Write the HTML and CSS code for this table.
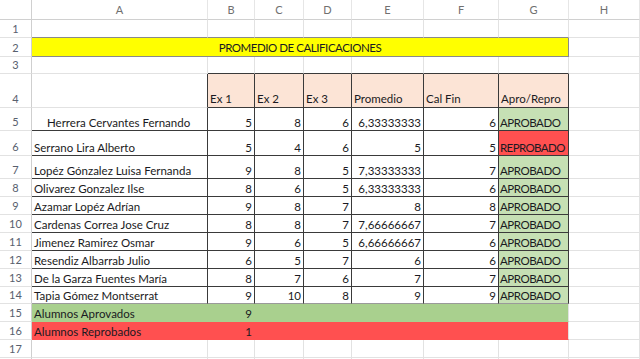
FILE: index.html
```html
<!DOCTYPE html>
<html lang="es">
<head>
<meta charset="utf-8">
<title>Promedio de calificaciones</title>
<link rel="stylesheet" href="styles.css">
</head>
<body>
<div class="sheet">
  <!-- column headers -->
  <div class="c ch corner"></div>
  <div class="c ch">A</div>
  <div class="c ch">B</div>
  <div class="c ch">C</div>
  <div class="c ch">D</div>
  <div class="c ch">E</div>
  <div class="c ch">F</div>
  <div class="c ch">G</div>
  <div class="c ch">H</div>

  <!-- row 1 -->
  <div class="c rh r1">1</div>
  <div class="c r1 above"></div><div class="c r1 above"></div><div class="c r1 above"></div><div class="c r1 above"></div><div class="c r1 above"></div><div class="c r1 above"></div><div class="c r1 above"></div><div class="c r1"></div>

  <!-- row 2 -->
  <div class="c rh r2">2</div>
  <div class="c r2 title caps">PROMEDIO DE CALIFICACIONES</div>
  <div class="c r2"></div>

  <!-- row 3 -->
  <div class="c rh r3">3</div>
  <div class="c r3"></div>
  <div class="c r3 above-dark"></div><div class="c r3 above-dark"></div><div class="c r3 above-dark"></div><div class="c r3 above-dark"></div><div class="c r3 above-dark"></div><div class="c r3 above-dark"></div>
  <div class="c r3"></div>

  <!-- row 4 -->
  <div class="c rh r4">4</div>
  <div class="c r4 left-of"></div>
  <div class="c r4 t hd">Ex 1</div>
  <div class="c r4 t hd">Ex 2</div>
  <div class="c r4 t hd">Ex 3</div>
  <div class="c r4 t hd">Promedio</div>
  <div class="c r4 t hd">Cal Fin</div>
  <div class="c r4 t hd">Apro/Repro</div>
  <div class="c r4"></div>

  <!-- row 5 -->
  <div class="c rh r5">5</div>
  <div class="c r5 t indent">Herrera Cervantes Fernando</div>
  <div class="c r5 t n">5</div><div class="c r5 t n">8</div><div class="c r5 t n">6</div>
  <div class="c r5 t n">6,33333333</div><div class="c r5 t n">6</div>
  <div class="c r5 t ok caps">APROBADO</div>
  <div class="c r5"></div>

  <!-- row 6 -->
  <div class="c rh r6">6</div>
  <div class="c r6 t">Serrano Lira Alberto</div>
  <div class="c r6 t n">5</div><div class="c r6 t n">4</div><div class="c r6 t n">6</div>
  <div class="c r6 t n">5</div><div class="c r6 t n">5</div>
  <div class="c r6 t bad caps">REPROBADO</div>
  <div class="c r6"></div>

  <!-- row 7 -->
  <div class="c rh r7">7</div>
  <div class="c r7 t">Lopéz Gónzalez Luisa Fernanda</div>
  <div class="c r7 t n">9</div><div class="c r7 t n">8</div><div class="c r7 t n">5</div>
  <div class="c r7 t n">7,33333333</div><div class="c r7 t n">7</div>
  <div class="c r7 t ok caps">APROBADO</div>
  <div class="c r7"></div>

  <!-- row 8 -->
  <div class="c rh rs">8</div>
  <div class="c rs t">Olivarez Gonzalez Ilse</div>
  <div class="c rs t n">8</div><div class="c rs t n">6</div><div class="c rs t n">5</div>
  <div class="c rs t n">6,33333333</div><div class="c rs t n">6</div>
  <div class="c rs t ok caps">APROBADO</div>
  <div class="c rs"></div>

  <!-- row 9 -->
  <div class="c rh rs">9</div>
  <div class="c rs t">Azamar Lopéz Adrían</div>
  <div class="c rs t n">9</div><div class="c rs t n">8</div><div class="c rs t n">7</div>
  <div class="c rs t n">8</div><div class="c rs t n">8</div>
  <div class="c rs t ok caps">APROBADO</div>
  <div class="c rs"></div>

  <!-- row 10 -->
  <div class="c rh rs">10</div>
  <div class="c rs t">Cardenas Correa Jose Cruz</div>
  <div class="c rs t n">8</div><div class="c rs t n">8</div><div class="c rs t n">7</div>
  <div class="c rs t n">7,66666667</div><div class="c rs t n">7</div>
  <div class="c rs t ok caps">APROBADO</div>
  <div class="c rs"></div>

  <!-- row 11 -->
  <div class="c rh rs">11</div>
  <div class="c rs t">Jimenez Ramirez Osmar</div>
  <div class="c rs t n">9</div><div class="c rs t n">6</div><div class="c rs t n">5</div>
  <div class="c rs t n">6,66666667</div><div class="c rs t n">6</div>
  <div class="c rs t ok caps">APROBADO</div>
  <div class="c rs"></div>

  <!-- row 12 -->
  <div class="c rh rs">12</div>
  <div class="c rs t">Resendiz Albarrab Julio</div>
  <div class="c rs t n">6</div><div class="c rs t n">5</div><div class="c rs t n">7</div>
  <div class="c rs t n">6</div><div class="c rs t n">6</div>
  <div class="c rs t ok caps">APROBADO</div>
  <div class="c rs"></div>

  <!-- row 13 -->
  <div class="c rh rs">13</div>
  <div class="c rs t">De la Garza Fuentes María</div>
  <div class="c rs t n">8</div><div class="c rs t n">7</div><div class="c rs t n">6</div>
  <div class="c rs t n">7</div><div class="c rs t n">7</div>
  <div class="c rs t ok caps">APROBADO</div>
  <div class="c rs"></div>

  <!-- row 14 -->
  <div class="c rh r14">14</div>
  <div class="c r14 t">Tapia Gómez Montserrat</div>
  <div class="c r14 t n">9</div><div class="c r14 t n">10</div><div class="c r14 t n">8</div>
  <div class="c r14 t n">9</div><div class="c r14 t n">9</div>
  <div class="c r14 t ok caps">APROBADO</div>
  <div class="c r14"></div>

  <!-- row 15 -->
  <div class="c rh rs">15</div>
  <div class="c rs green">Alumnos Aprovados</div>
  <div class="c rs green n">9</div>
  <div class="c rs green"></div><div class="c rs green"></div><div class="c rs green"></div><div class="c rs green"></div><div class="c rs green end"></div>
  <div class="c rs"></div>

  <!-- row 16 -->
  <div class="c rh rs">16</div>
  <div class="c rs red">Alumnos Reprobados</div>
  <div class="c rs red n">1</div>
  <div class="c rs red"></div><div class="c rs red"></div><div class="c rs red"></div><div class="c rs red"></div><div class="c rs red end"></div>
  <div class="c rs"></div>

  <!-- row 17 -->
  <div class="c rh rs">17</div>
  <div class="c rs"></div><div class="c rs"></div><div class="c rs"></div><div class="c rs"></div><div class="c rs"></div><div class="c rs"></div><div class="c rs"></div><div class="c rs"></div>

  <!-- row 18 (only its top edge is visible) -->
  <div class="c rh rs"></div>
  <div class="c rs"></div><div class="c rs"></div><div class="c rs"></div><div class="c rs"></div><div class="c rs"></div><div class="c rs"></div><div class="c rs"></div><div class="c rs"></div>
</div>
</body>
</html>
```

FILE: styles.css
```css
html, body {
  margin: 0;
  padding: 0;
  background: #ffffff;
  overflow: hidden;
}

.sheet {
  display: grid;
  grid-template-columns: 32px 176px 47px 49px 48px 72px 75px 70px 71px;
  grid-auto-rows: auto;
  font-family: Lato, "Liberation Sans", sans-serif;
  font-size: 11.5px;
  color: #1a1a22;
  width: 640px;
}

.c {
  box-sizing: border-box;
  border-right: 1px solid #e2e2e2;
  border-bottom: 1px solid #e2e2e2;
  display: flex;
  align-items: flex-end;
  padding: 0 2px 1px 2px;
  white-space: nowrap;
  overflow: visible;
  min-width: 0;
}

.caps { letter-spacing: -0.45px; }

.ch {
  height: 20px;
  justify-content: center;
  align-items: center;
  color: #707070;
  font-size: 11px;
  padding: 0;
  border-bottom-color: #d0d0d0;
  border-right-color: #e6e6e6;
}
.ch.corner { border-right-color: #d0d0d0; }

.rh {
  justify-content: center;
  color: #58606e;
  font-size: 11px;
  padding: 0 0 2px 0;
  border-right-color: #cfcfcf;
}

.r1 { height: 18px; }
.r2 { height: 19px; }
.r3 { height: 17px; }
.r4 { height: 34px; }
.r5 { height: 23px; }
.r6 { height: 25px; }
.r7 { height: 23px; }
.rs { height: 18px; }
.r14 { height: 17px; }

.above { border-bottom-color: #8a8a8a; }
.above-dark { border-bottom-color: #3a3a3a; }
.left-of { border-right-color: #3a3a3a; }

.title {
  grid-column: span 7;
  background: #ffff00;
  justify-content: center;
  border-right-color: #8a8a8a;
  border-bottom-color: #8a8a8a;
  padding-bottom: 2px;
}

.t {
  border-right-color: #3a3a3a;
  border-bottom-color: #3a3a3a;
}
.r14.t { border-bottom-color: #9a9a9a; }

.hd {
  background: #fce4d6;
  padding-bottom: 2px;
}

.n { justify-content: flex-end; }

.indent { padding-left: 15px; }

.ok { background: #c6e0b4; padding-left: 1px; }
.bad { background: #ff5050; padding-left: 1px; letter-spacing: -0.6px; }

.green {
  background: #a9d08e;
  border-right-color: #a9d08e;
  border-bottom-color: #a9d08e;
}
.red {
  background: #ff5050;
  border-right-color: #ff5050;
  border-bottom-color: #ff5050;
}
.green.end, .red.end { border-right-color: #e2e2e2; }
```
